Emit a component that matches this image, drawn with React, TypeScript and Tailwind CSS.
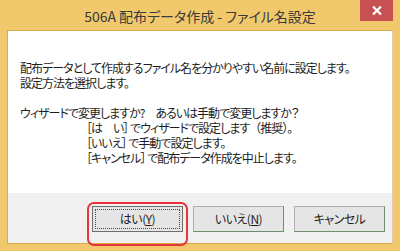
import React from "react";

const font = {
  fontFamily: '"Noto Sans CJK JP", "Noto Sans", sans-serif',
};

function DialogButton({
  children,
  focused,
}: {
  children: React.ReactNode;
  focused?: boolean;
}) {
  return (
    <div className="relative">
      {focused && (
        <div className="absolute -left-[5px] -right-[5px] -top-[4px] -bottom-[3px] rounded-[7px] border-2 border-[#e8333b]" />
      )}
      <button
        className={`relative flex h-[26px] w-[91px] items-center justify-center border bg-[#e5e5e5] text-[12px] tracking-[-0.5px] text-[#1e1e1e] [font-feature-settings:'palt'] ${
          focused
            ? "border-[#6d6d6d]"
            : "border-[#adadad] border-r-[#6f8f6f] border-b-[#6f8f6f]"
        }`}
      >
        {focused && (
          <span className="absolute inset-[2px] border border-dotted border-[#4a4a4a]" />
        )}
        <span className="relative">{children}</span>
      </button>
    </div>
  );
}

export default function App() {
  return (
    <div className="h-[251px] w-[400px] bg-[#f1c96c]" style={font}>
      {/* title bar */}
      <div className="relative flex h-[30px] items-center justify-center pt-[2px] text-[14px] text-[#3a3a3a] [font-feature-settings:'palt']">
        506A 配布データ作成 - ファイル名設定
        <div className="absolute right-[7px] top-0 flex h-[21px] w-[33px] items-center justify-center bg-[#c75050]">
          <svg width="10" height="9" viewBox="0 0 10 9">
            <path d="M1 0.5 L9 8.5 M9 0.5 L1 8.5" stroke="#fff" strokeWidth="2.2" />
          </svg>
        </div>
      </div>

      {/* body */}
      <div className="mx-[7px] border border-[#d9aa48] border-r-[#e8c7b8]">
        <div className="h-[162px] bg-white pl-[12px] pt-[29px] text-[12px] leading-[15px] tracking-[-1px] text-[#1e1e1e] [font-feature-settings:'palt']">
          <p>配布データとして作成するファイル名を分かりやすい名前に設定します。</p>
          <p>設定方法を選択します。</p>
          <p>&nbsp;</p>
          <p>ウィザードで変更しますか?　あるいは手動で変更しますか？</p>
          <div className="pl-[66px]">
            <p>
              ［は　い］ でウィザードで設定します
              <span className="[font-feature-settings:normal]">（推奨）。</span>
            </p>
            <p>［いいえ］ で手動で設定します。</p>
            <p>［キャンセル］ で配布データ作成を中止します。</p>
          </div>
        </div>
        <div className="flex h-[50px] justify-end gap-[10px] bg-[#f0f0f0] pr-[7px] pt-[13px]">
          <DialogButton focused>
            はい(<span className="underline">Y</span>)
          </DialogButton>
          <DialogButton>
            いいえ(<span className="underline">N</span>)
          </DialogButton>
          <DialogButton>キャンセル</DialogButton>
        </div>
      </div>
    </div>
  );
}
